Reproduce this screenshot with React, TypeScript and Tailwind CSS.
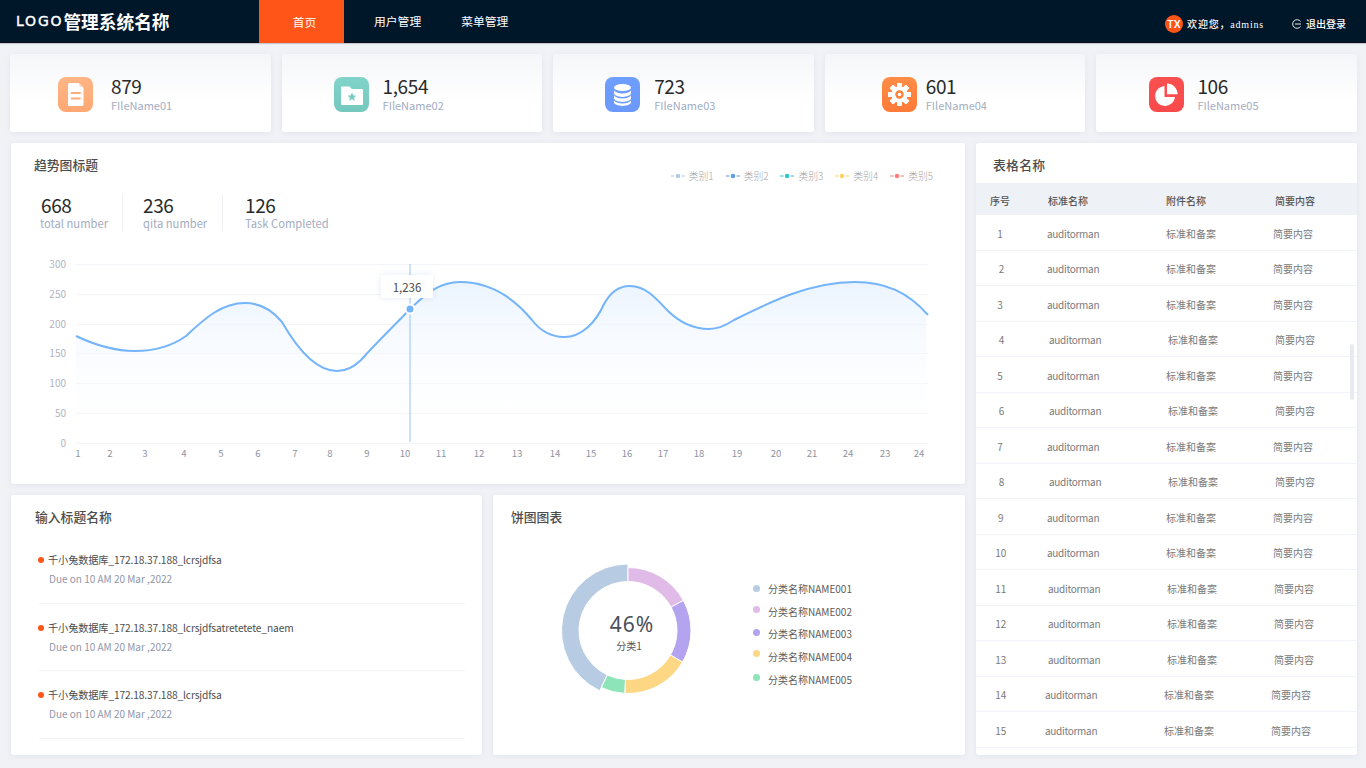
import React from "react";

const linePath =
  "M76 336 C95 345 115 351 135 351 C155 351 172 346 186 336 C205 318 222 303 245 303 C262 303 273 311 282 322 C298 350 316 371 337 371 C348 371 355 366 361 360 C378 341 395 325 410 309 C425 295 438 282 460 282 C490 282 513 297 532 320 C540 331 552 337 564 337 C582 337 596 322 604 304 C610 293 618 286 630 286 C645 286 655 297 667 310 C678 321 692 329 709 329 C718 329 725 326 734 320 C770 302 810 282 855 282 C885 282 908 292 928 315";

const gridYs: [number, string][] = [
  [264, "300"],
  [294, "250"],
  [324, "200"],
  [353, "150"],
  [383, "100"],
  [413, "50"],
  [443, "0"],
];
const xLabels: [number, string][] = [
  [78, "1"], [110, "2"], [145, "3"], [184, "4"], [221, "5"], [258, "6"], [295, "7"], [330, "8"],
  [367, "9"], [405, "10"], [441, "11"], [479, "12"], [517, "13"], [555, "14"], [591, "15"], [627, "16"],
  [663, "17"], [699, "18"], [737, "19"], [776, "20"], [812, "21"], [848, "24"], [885, "23"], [919, "24"],
];

function IconFile() {
  return (
    <svg viewBox="0 0 35 35" className="w-full h-full">
      <path d="M10 7.500a1.500 1.500 0 0 1 1.500-1.500H20.500L25.500 11V27.500A1.500 1.500 0 0 1 24 29H11.500A1.500 1.500 0 0 1 10 27.500Z" fill="#fff" />
      <path d="M21.500 6 L25.500 10 H21.500Z" fill="#ffd9bf" />
      <rect x="12.800" y="15" width="10" height="2" rx="0.600" fill="#ffab75" />
      <rect x="12.800" y="20.400" width="10" height="2" rx="0.600" fill="#ffab75" />
    </svg>
  );
}
function IconFolder() {
  return (
    <svg viewBox="0 0 35 35" className="w-full h-full">
      <path d="M7 10.500A1 1 0 0 1 8 9.500H15.500L18 12H28A1 1 0 0 1 29 13V27A1 1 0 0 1 28 28H8A1 1 0 0 1 7 27Z" fill="#fff" />
      <path d="M18 15.500l1.300 2.800 3 .4-2.200 2 .6 3-2.700-1.500-2.700 1.500.6-3-2.200-2 3-.4Z" fill="#7bcdc3" />
    </svg>
  );
}
function IconDb() {
  return (
    <svg viewBox="0 0 35 35" className="w-full h-full" fill="#fff">
      <ellipse cx="17.500" cy="10.500" rx="8.500" ry="3.600" />
      <path d="M9 13.500c1.500 2 5 3 8.500 3s7-1 8.500-3v2.800c0 2-3.800 3.600-8.500 3.600S9 18.300 9 16.300Z" />
      <path d="M9 18.500c1.500 2 5 3 8.500 3s7-1 8.500-3v2.800c0 2-3.800 3.600-8.500 3.600S9 23.300 9 21.300Z" />
      <path d="M9 23.500c1.500 2 5 3 8.500 3s7-1 8.500-3v1.800c0 2-3.800 3.600-8.500 3.600S9 27.300 9 25.300Z" />
    </svg>
  );
}
function IconGear() {
  return (
    <svg viewBox="0 0 35 35" className="w-full h-full">
      {[0, 45, 90, 135, 180, 225, 270, 315].map((a) => (
        <rect key={a} x="15" y="6" width="5" height="23" rx="1" fill="#fff" transform={`rotate(${a} 17.500 17.500)`} />
      ))}
      <circle cx="17.500" cy="17.500" r="8" fill="#fff" />
      <circle cx="17.500" cy="17.500" r="4.200" fill="#ff8038" />
      <circle cx="17.500" cy="17.500" r="1.800" fill="#fff" />
    </svg>
  );
}
function IconPie() {
  return (
    <svg viewBox="0 0 35 35" className="w-full h-full" fill="#fff">
      <path d="M15.500 9A10 10 0 1 0 26 20H15.500Z" />
      <path d="M18 6.500A10.500 10.500 0 0 1 28.500 17.300H18Z" />
    </svg>
  );
}

const stats = [
  { v: "879", n: "FIleName01", pl: "pl-[48px]", ml: "ml-[18px]", box: "bg-gradient-to-b from-[#ffb585] to-[#ffa873]", icon: <IconFile /> },
  { v: "1,654", n: "FIleName02", pl: "pl-[52px]", ml: "ml-[14px]", box: "bg-gradient-to-b from-[#80d4ca] to-[#74c8be]", icon: <IconFolder /> },
  { v: "723", n: "FIleName03", pl: "pl-[52px]", ml: "ml-[14px]", box: "bg-gradient-to-b from-[#6e9eff] to-[#6b99fb]", icon: <IconDb /> },
  { v: "601", n: "FIleName04", pl: "pl-[57px]", ml: "ml-[9px]", box: "bg-gradient-to-b from-[#ff8c45] to-[#fd7a38]", icon: <IconGear /> },
  { v: "106", n: "FIleName05", pl: "pl-[53px]", ml: "ml-[13px]", box: "bg-gradient-to-b from-[#fb5050] to-[#f94a4a]", icon: <IconPie /> },
];

const legend: [string, string][] = [
  ["类别1", "#b5c9e3"],
  ["类别2", "#5a9bea"],
  ["类别3", "#2bc5d0"],
  ["类别4", "#ffcf5f"],
  ["类别5", "#ff7a7a"],
];

const rows: [number, number, number][] = [
  [1, 0, 0], [2, 2, 0], [3, 0, 0], [4, 2, 2], [5, 0, 0], [6, 2, 2], [7, 0, 0], [8, 2, 2],
  [9, 1, 0], [10, 1, 0], [11, 1, 1], [12, 1, 1], [13, 1, 1], [14, 1, -2], [15, 1, -2],
];

function polar(r: number, deg: number) {
  const a = ((deg - 90) * Math.PI) / 180;
  return [628 + r * Math.cos(a), 630.5 + r * Math.sin(a)];
}
function arc(ro: number, ri: number, s: number, e: number) {
  const [a, b] = polar(ro, s);
  const [c, d] = polar(ro, e);
  const [f, g] = polar(ri, e);
  const [h, i] = polar(ri, s);
  const large = e - s > 180 ? 1 : 0;
  return `M${a} ${b}A${ro} ${ro} 0 ${large} 1 ${c} ${d}L${f} ${g}A${ri} ${ri} 0 ${large} 0 ${h} ${i}Z`;
}
const slices: [number, number, number, string][] = [
  [66.5, 205, 360, "#b7cce2"],
  [63, 0, 61.5, "#e0bbe8"],
  [63, 61.5, 120, "#b4a3ee"],
  [63, 120, 183, "#fed784"],
  [63, 183, 205, "#8de4b9"],
];
const pieLegend: [string, string, string][] = [
  ["分类名称NAME001", "#b7cce2", "mt-0"],
  ["分类名称NAME002", "#e0bbe8", "-mt-[3px]"],
  ["分类名称NAME003", "#b4a3ee", "-mt-[3px]"],
  ["分类名称NAME004", "#fed784", "-mt-[5px]"],
  ["分类名称NAME005", "#8de4b9", "-mt-[3px]"],
];

const todo = [
  "千小兔数据库_172.18.37.188_lcrsjdfsa",
  "千小兔数据库_172.18.37.188_lcrsjdfsatretetete_naem",
  "千小兔数据库_172.18.37.188_lcrsjdfsa",
];

function Title({ children }: { children: React.ReactNode }) {
  return <h2 className="text-[12.8px] leading-[18px] font-medium text-[#4d4d4d]">{children}</h2>;
}

export default function App() {
  return (
    <div className="w-[1366px] h-[768px] overflow-hidden bg-[#f0f2f6] font-['Noto_Sans_CJK_SC','Noto_Sans',sans-serif]">
      <header className="h-[43px] bg-[#001629] flex border-b border-b-[#0a0f18] shadow-[0_1px_1px_#c5c8ce]">
        <div className="w-[259px] pl-4 flex items-center text-white whitespace-nowrap pt-[1px]">
          <span className="font-['DejaVu_Sans',sans-serif] text-[14px] tracking-[1.8px] font-normal [-webkit-text-stroke:0.4px_white]">LOGO</span>
          <span className="text-[17.7px] font-bold leading-none">管理系统名称</span>
        </div>
        <div className="w-[85px] h-[43px] bg-[#ff5519] text-white text-[11.8px] flex items-center justify-center pl-[6px]">首页</div>
        <div className="ml-[30px] flex items-center text-white text-[11.8px]">用户管理</div>
        <div className="ml-[40px] flex items-center text-white text-[11.8px]">菜单管理</div>
        <div className="ml-auto flex items-center text-white pt-[6px]">
          <div className="w-[18.5px] h-[18.5px] rounded-full bg-[#ff5519] text-[11px] font-medium flex items-center justify-center font-['Roboto',sans-serif] leading-none">TX</div>
          <span className="ml-[4px] text-[10px] tracking-[0.8px] font-['Liberation_Serif','Noto_Sans_CJK_SC',serif] font-medium whitespace-nowrap">欢迎您，admins</span>
          <svg viewBox="0 0 10 10" className="ml-[28px] w-[10px] h-[10px]" fill="none" stroke="#fff" strokeWidth="0.9">
            <path d="M8.500 2.500A4.300 4.300 0 1 0 8.500 7.500" />
            <path d="M3 5H9" />
          </svg>
          <span className="ml-[4px] mr-[20px] text-[10px] font-['Liberation_Serif','Noto_Sans_CJK_SC',serif] font-medium whitespace-nowrap">退出登录</span>
        </div>
      </header>

      <div className="flex gap-[11px] pl-[10px] pt-[11px]">
        {stats.map((s) => (
          <div
            key={s.n}
            className={`w-[260.6px] h-[78px] rounded-[3px] bg-gradient-to-b from-[#f5f6f9] to-white to-60% shadow-[0_1px_5px_rgba(180,190,210,0.25)] flex items-center ${s.pl}`}
          >
            <div className={`w-[35px] h-[35px] mt-[3px] rounded-[8px] shrink-0 ${s.box}`}>{s.icon}</div>
            <div className={`${s.ml} flex flex-col`}>
              <div className="text-[19px] leading-[24px] tracking-[-0.4px] text-[#2a2a2a] mt-[1px]">{s.v}</div>
              <div className="text-[11px] leading-[15px] text-[#a3adc2]">{s.n}</div>
            </div>
          </div>
        ))}
      </div>

      <div className="flex pl-[11px] pt-[11px] gap-[11px]">
        <div className="w-[954px] flex flex-col gap-[11px]">
          <section className="h-[341px] bg-white rounded-[3px] shadow-[0_1px_5px_rgba(180,190,210,0.25)] flex flex-col">
            <div className="flex justify-between pl-[23px] pr-[32px] pt-[13px] h-[52px]">
              <Title>趋势图标题</Title>
              <div className="flex gap-[12px] pt-[13px] h-fit">
                {legend.map(([t, c]) => (
                  <div key={t} className="flex items-center gap-[4px] text-[9.8px] leading-[14px] text-[#a6a6a6] font-light">
                    <svg width="14" height="6" viewBox="0 0 14 6">
                      <path d="M0 3H3.500M10.500 3H14" stroke={c} strokeWidth="1" />
                      <circle cx="7" cy="3" r="2.200" fill={c} />
                    </svg>
                    {t}
                  </div>
                ))}
              </div>
            </div>
            <div className="flex pl-[29px] h-[36px]">
              {[
                ["668", "total number", "w-[83px] pl-[1px]", "border-r"],
                ["236", "qita number", "w-[100px] pl-[20px]", "border-r"],
                ["126", "Task Completed", "pl-[22px]", ""],
              ].map(([v, l, w, b]) => (
                <div key={v} className={`${w} ${b} border-r-[#eef0f4] flex flex-col`}>
                  <div className="text-[19px] leading-[20px] tracking-[-0.4px] text-[#2a2a2a]">{v}</div>
                  <div className={`text-[11.2px] leading-[16px] text-[#a3adc2] ${v === "668" ? "-ml-[1px]" : ""} whitespace-nowrap`}>{l}</div>
                </div>
              ))}
            </div>
            <svg viewBox="11 254 954 210" className="block w-[954px] h-[210px] mt-[23px]">
              <defs>
                <linearGradient id="area" x1="0" y1="0" x2="0" y2="1">
                  <stop offset="0" stopColor="#ebf4ff" />
                  <stop offset="1" stopColor="#ffffff" stopOpacity="0.1" />
                </linearGradient>
              </defs>
              {gridYs.map(([y, t]) => (
                <g key={t}>
                  <line x1="76" x2="928" y1={y + 0.5} y2={y + 0.5} stroke="#f2f4f8" strokeWidth="1" />
                  <text x="66" y={y + 3.7} textAnchor="end" fontSize="10" fill="#b1b4bf">{t}</text>
                </g>
              ))}
              {xLabels.map(([x, t], i) => (
                <text key={i} x={x} y="457" textAnchor="middle" fontSize="9.6" fill="#8f93a3">{t}</text>
              ))}
              <path d={`${linePath} L926 315 L926 428 L76 428 Z`} fill="url(#area)" />
              <line x1="410" x2="410" y1="264" y2="442" stroke="#93c4fb" strokeWidth="1" />
              <path d={linePath} fill="none" stroke="#74b4fb" strokeWidth="2" />
              <circle cx="410" cy="309" r="4.5" fill="#74b4fb" stroke="#fff" strokeWidth="2" />
              <rect x="381" y="275" width="52" height="23" rx="2" fill="#fff" style={{ filter: "drop-shadow(0 0 3px rgba(150,170,200,0.25))" }} />
              <text x="407" y="292" textAnchor="middle" fontSize="11.5" fill="#4a4a4a">1,236</text>
            </svg>
          </section>

          <div className="flex gap-[11px] h-[260px]">
            <section className="w-[471px] bg-white rounded-[3px] shadow-[0_1px_5px_rgba(180,190,210,0.25)] pl-[24px] pr-[17px] pt-[13px]">
              <Title>输入标题名称</Title>
              <div className="mt-[10px]">
                {todo.map((t, i) => (
                  <div key={i} className="h-[67.5px] ml-[4px] border-b border-b-[#f2f4f7]">
                    <div className="flex items-center pt-[15px]">
                      <span className="w-[6px] h-[6px] rounded-full bg-[#ff5519] shrink-0 -ml-[1px]"></span>
                      <span className="ml-[4px] text-[10.2px] tracking-[-0.12px] leading-[18px] text-[#4d4d4d] whitespace-nowrap">{t}</span>
                    </div>
                    <div className="ml-[10px] text-[10px] leading-[18px] mt-[1px] text-[#9097ab]">Due on 10 AM 20 Mar ,2022</div>
                  </div>
                ))}
              </div>
            </section>
            <section className="relative flex-1 bg-white rounded-[3px] shadow-[0_1px_5px_rgba(180,190,210,0.25)] pl-[18px] pt-[13px]">
              <Title>饼图图表</Title>
              <div className="flex mt-[24px]">
                <div className="relative w-[242px] h-[160px]">
                  <svg viewBox="553 550 150 160" className="absolute left-[42px] top-0 w-[150px] h-[160px]">
                    {slices.map(([r, s, e, c]) => (
                      <path key={c} d={arc(r, 49, s, e)} fill={c} stroke="#fff" strokeWidth="1" />
                    ))}
                  </svg>
                  <div className="absolute left-[81px] top-[60px] w-[80px] text-center text-[21px] leading-[28px] tracking-[1px] text-[#4a4f59] font-['Noto_Sans',sans-serif]">46%</div>
                  <div className="absolute left-[78px] top-[89px] w-[80px] text-center text-[10px] leading-[14px] text-[#555]">分类1</div>
                </div>
                <div className="flex flex-col pt-[27px]">
                  {pieLegend.map(([t, c, m]) => (
                    <div key={t} className="h-[22.7px] flex items-center whitespace-nowrap text-[10px] text-[#5c5c5c]">
                      <span className={`w-[7px] h-[7px] rounded-full ${m}`} style={{ background: c }}></span>
                      <span className="ml-[8px]">{t}</span>
                    </div>
                  ))}
                </div>
              </div>
            </section>
          </div>
        </div>

        <section className="relative w-[381px] h-[612px] overflow-hidden bg-white rounded-[3px] shadow-[0_1px_5px_rgba(180,190,210,0.25)]">
          <div className="h-[40px] pl-[17px] pt-[13px] text-[12.8px] leading-[18px] font-medium tracking-[0.3px] text-[#4d4d4d]">表格名称</div>
          <div className="h-[32px] bg-[#eef1f6] grid grid-cols-[70px_119px_109px_1fr] items-center pl-[1px] pt-[2px] text-[10px] font-medium text-[#555]">
            <div className="w-[46px] text-center">序号</div>
            <div className="pl-[1px]">标准名称</div>
            <div>附件名称</div>
            <div>简要内容</div>
          </div>
          {rows.map(([n, c, d]) => (
            <div key={n} className="h-[35.5px] border-b border-b-[#f1f4f9] grid grid-cols-[70px_119px_107px_1fr] items-center pl-[1px] pt-[2px] text-[10px] text-[#7a7a7a]">
              <div className="w-[46px] text-center" style={{ paddingLeft: c * 1.5 }}>{n}</div>
              <div className="tracking-[-0.3px]" style={{ paddingLeft: d < 0 ? 0 : d, marginLeft: d < 0 ? d : 0 }}>auditorman</div>
              <div style={{ paddingLeft: d < 0 ? 0 : d, marginLeft: d < 0 ? d : 0 }}>标准和备案</div>
              <div style={{ paddingLeft: d < 0 ? 0 : d, marginLeft: d < 0 ? d : 0 }}>简要内容</div>
            </div>
          ))}
          <div className="absolute right-[3px] top-[201px] w-[4px] h-[56px] rounded-full bg-[#e8eaef]"></div>
        </section>
      </div>
    </div>
  );
}
